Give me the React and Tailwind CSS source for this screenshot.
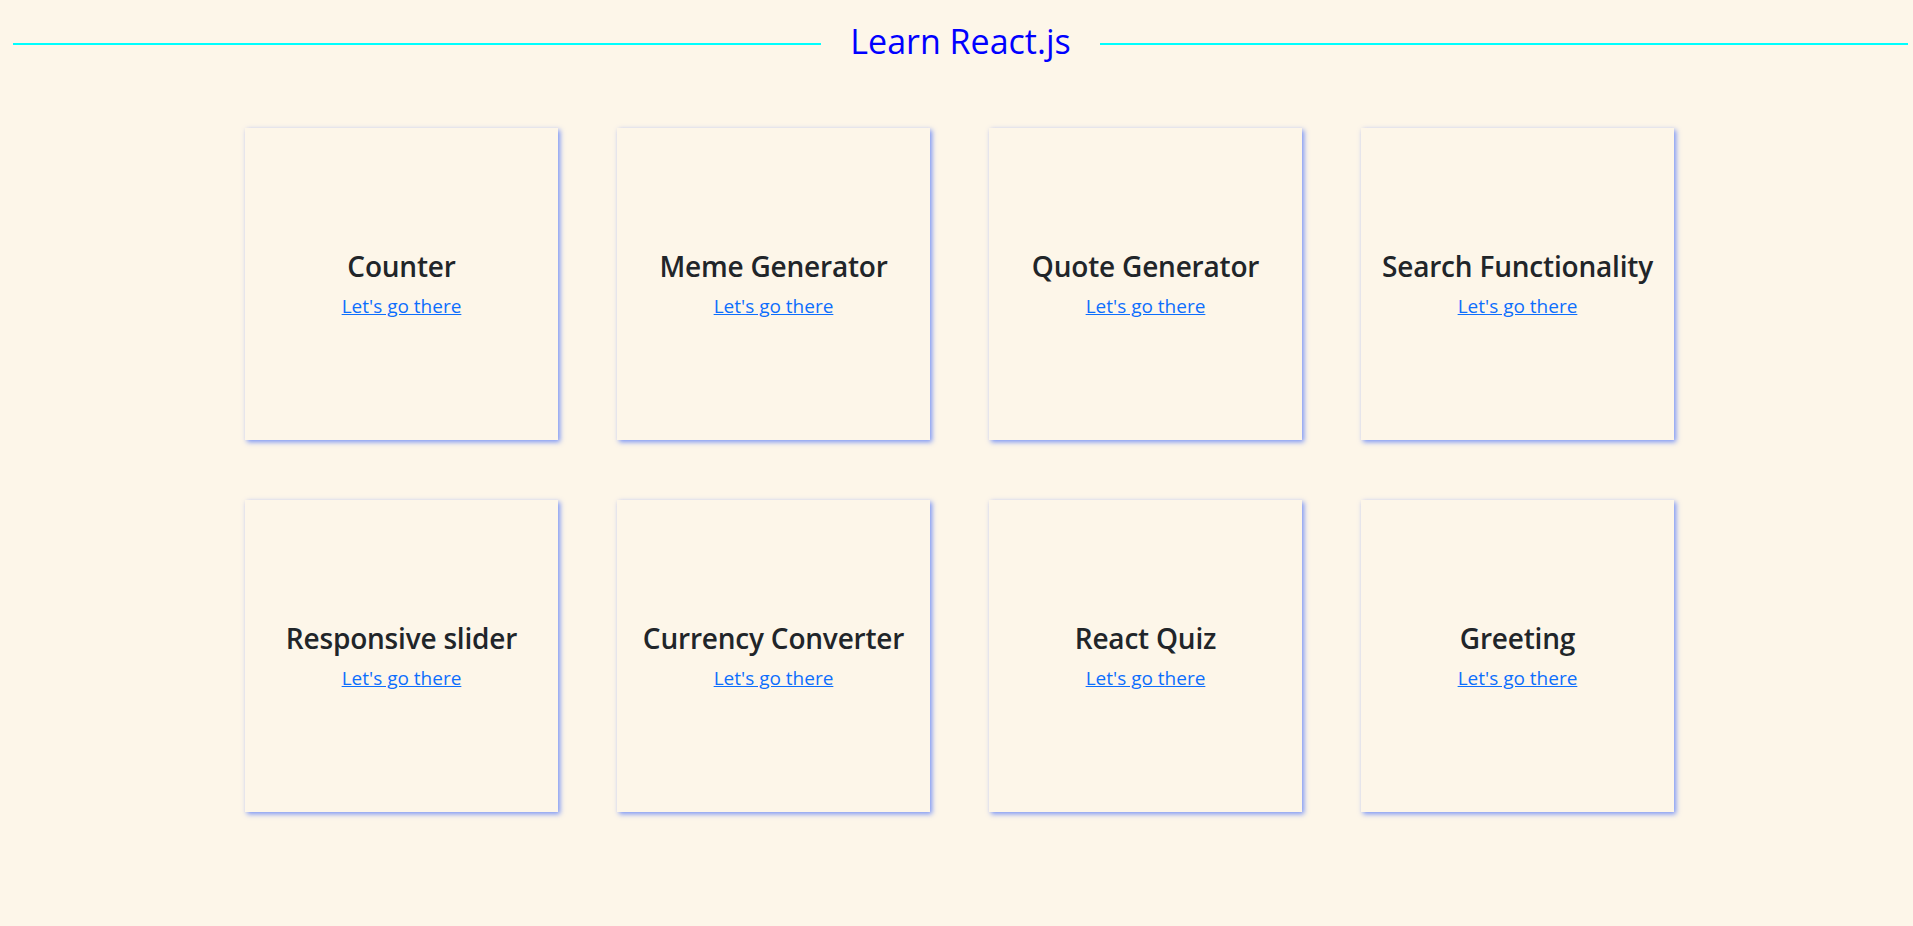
const projects = [
  'Counter',
  'Meme Generator',
  'Quote Generator',
  'Search Functionality',
  'Responsive slider',
  'Currency Converter',
  'React Quiz',
  'Greeting',
]

function ProjectCard({ title }) {
  return (
    <div className="w-[313px] h-[312px] flex flex-col items-center justify-center text-center bg-[#fdf6e9] shadow-[2px_2px_5px_rgba(30,80,255,0.6)]">
      <h3 className="text-[28px] leading-[1.2] font-semibold text-[#212529] mb-[10px] tracking-[-0.2px]">{title}</h3>
      <a href="#" className="text-[19px] leading-6 text-[#0d6efd] underline">
        Let's go there
      </a>
    </div>
  )
}

export default function App() {
  return (
    <div className="min-h-screen bg-[#fdf6e9] font-['Open_Sans',sans-serif] pb-16">
      {/* Header */}
      <div className="flex items-center pl-[13px] pr-[5px] pt-[22px]">
        <div className="flex-1 h-[2px] bg-[#00ffff]" />
        <h1 className="mx-[29px] pb-[5px] text-[34px] leading-[38px] text-[#0000ff] font-medium">Learn React.js</h1>
        <div className="flex-1 h-[2px] bg-[#00ffff]" />
      </div>

      {/* Projects */}
      <div className="ml-[245px] mt-[63px] grid grid-cols-[repeat(4,313px)] gap-x-[59px] gap-y-[60px]">
        {projects.map(p => (
          <ProjectCard key={p} title={p} />
        ))}
      </div>
    </div>
  )
}
